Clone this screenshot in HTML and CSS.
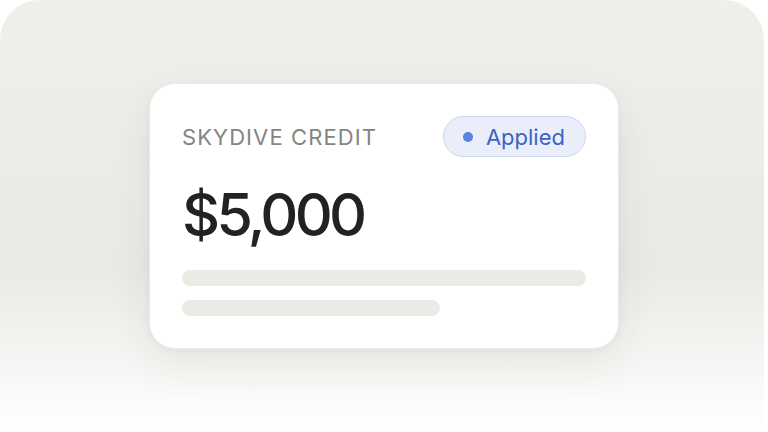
FILE: index.html
```html
<!DOCTYPE html>
<html lang="en">

<head>
    <meta charset="UTF-8">
    <meta name="viewport" content="width=device-width, initial-scale=1.0">
    <title>Skydive Credit</title>
    <link rel="stylesheet" href="styles.css">
</head>

<body>
    <div class="stage">
        <div class="card">
            <div class="card-head">
                <span class="label">SKYDIVE CREDIT</span>
                <span class="badge"><span class="dot"></span>Applied</span>
            </div>
            <div class="amount">$5,000</div>
            <div class="bars">
                <div class="bar"></div>
                <div class="bar short"></div>
            </div>
        </div>
    </div>
</body>

</html>
```

FILE: styles.css
```css
html,
body {
    margin: 0;
    height: 100%;
    background-color: #ffffff;
}

body {
    font-family: 'Inter', 'Liberation Sans', sans-serif;
    overflow: hidden;
}

.stage {
    width: 764px;
    height: 432px;
    border-radius: 40px 40px 0 0;
    background: linear-gradient(to bottom, #f0efeb 0%, #eae9e5 62%, #ffffff 100%); /* fades out at the bottom */
    display: flex;
    justify-content: center;
    align-items: center;
    padding-left: 4px;
    box-sizing: border-box;
}

.card {
    width: 470px;
    height: 266px;
    box-sizing: border-box;
    background-color: #ffffff;
    border: 1px solid #ecebe7;
    border-radius: 26px;
    padding: 32px;
    box-shadow: 0 16px 40px rgba(60, 55, 40, 0.08), 0 2px 6px rgba(60, 55, 40, 0.04);
}

.card-head {
    display: flex;
    justify-content: space-between;
    align-items: center;
}

.label {
    font-size: 22px;
    letter-spacing: 1.1px;
    color: #85847f;
}

.badge {
    display: flex;
    align-items: center;
    gap: 13px;
    height: 41px;
    box-sizing: border-box;
    padding: 0 20px 0 19px;
    border: 1.5px solid #cbd7ee;
    border-radius: 21px;
    background-color: #e9eefa;
    color: #3d62c4;
    font-size: 22px;
}

.dot {
    width: 10px;
    height: 10px;
    border-radius: 50%;
    background-color: #5a84dd;
}

.amount {
    margin-top: 26px;
    font-size: 59px;
    font-weight: 500;
    line-height: 64px;
    letter-spacing: -3.7px;
    color: #222220;
}

.bars {
    margin-top: 23px;
    display: flex;
    flex-direction: column;
    gap: 14px;
}

.bar {
    height: 16px;
    border-radius: 8px;
    background-color: #ebeae5;
}

.bar.short {
    width: 258px;
}
```
